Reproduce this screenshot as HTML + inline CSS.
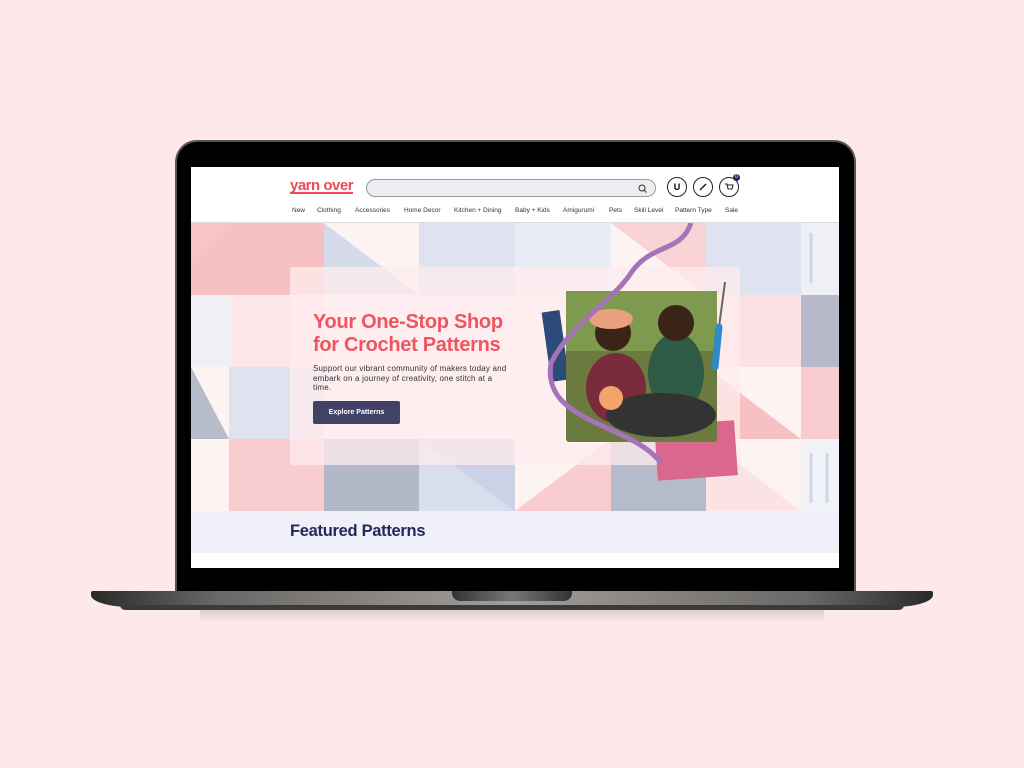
<!DOCTYPE html>
<html><head><meta charset="utf-8"><style>
*{margin:0;padding:0;box-sizing:border-box}
body{width:1024px;height:768px;background:#fde9e9;position:relative;overflow:hidden;font-family:"Liberation Sans",sans-serif}
.lid{position:absolute;left:175px;top:140px;width:681px;height:452px;background:#000;border-radius:22px 22px 0 0;border:2px solid #555;border-bottom:none}
.screen{position:absolute;left:191px;top:167px;width:648px;height:401px;background:#fff;overflow:hidden}
.base{position:absolute;left:91px;top:591px;width:842px;height:16px;background:linear-gradient(90deg,#2a2a2a,#6a6866 15%,#a29e9b 50%,#6a6866 85%,#2a2a2a);border-radius:2px 2px 40px 40px/2px 2px 12px 12px}
.base2{position:absolute;left:120px;top:605px;width:784px;height:5px;background:#3a3a3a;border-radius:0 0 30px 30px}
.notch{position:absolute;left:452px;top:591px;width:120px;height:10px;background:linear-gradient(90deg,#333,#777,#333);border-radius:0 0 8px 8px}
.shadow{position:absolute;left:200px;top:608px;width:624px;height:14px;background:linear-gradient(#d8c9c9,#fde9e9)}
.hdr{position:absolute;left:0;top:0;width:648px;height:56px;background:#fff;border-bottom:1px solid #ddd}
.logo{position:absolute;left:99px;top:10px;font-weight:bold;font-size:15px;color:#ee4a56;letter-spacing:-.5px}
.logo:after{content:"";position:absolute;left:0;right:0;bottom:0;height:2px;background:#ee4a56}
.search{position:absolute;left:175px;top:12px;width:290px;height:18px;border:1px solid #999;border-radius:9px;background:#ececf1}
.ic{position:absolute;top:10px;width:20px;height:20px;border:1.3px solid #222;border-radius:50%;font-size:9px;font-weight:bold;text-align:center;line-height:18px}
.nav{position:absolute;top:40px;font-size:6.5px;color:#333}
.hero{position:absolute;left:0;top:56px;width:648px;height:288px}
.card{position:absolute;left:99px;top:100px;width:450px;height:198px;background:rgba(255,236,238,.75);border-radius:3px}
h1{position:absolute;left:122px;top:144px;font-size:20px;line-height:23px;color:#ee5560;font-weight:bold;letter-spacing:-.3px;white-space:nowrap}
.p{position:absolute;left:122px;top:197px;font-size:8px;line-height:9.5px;color:#333;width:196px;letter-spacing:.2px}
.btn{position:absolute;left:122px;top:234px;width:87px;height:23px;background:#424167;border-radius:2px;color:#fff;font-size:7px;font-weight:bold;text-align:center;line-height:23px}
.feat{position:absolute;left:0;top:344px;width:648px;height:42px;background:#eff0f8}
.feat span{position:absolute;left:99px;top:11px;font-size:16.5px;font-weight:bold;color:#25285a;letter-spacing:-.3px}
</style></head><body>
<div class="lid"></div>
<div class="shadow"></div>
<div class="base"></div><div class="base2"></div><div class="notch"></div>
<div class="screen">
 <div class="hero">
  <svg width="648" height="288" viewBox="0 0 648 288">
   <rect width="648" height="288" fill="#fdf3f3"/>
   <polygon points="0,0 38,0 0,40" fill="#f7c4c7"/>
   <rect x="38" y="0" width="95" height="72" fill="#f7c1c4"/>
   <polygon points="0,40 38,0 38,72 0,72" fill="#f7c1c4"/>
   <polygon points="133,0 228,72 133,72" fill="#d6dbea"/>
   <rect x="228" y="0" width="96" height="72" fill="#dfe3ef"/>
   <rect x="324" y="0" width="96" height="72" fill="#e9ecf4"/>
   <polygon points="420,0 515,0 515,72" fill="#f9d2d5"/>
   <rect x="515" y="0" width="95" height="72" fill="#dfe3ef"/>
   <rect x="610" y="0" width="38" height="72" fill="#eef0f6"/>
   <rect x="0" y="72" width="38" height="72" fill="#eef0f6"/>
   <rect x="38" y="72" width="95" height="72" fill="#fde8e9"/>
   <rect x="515" y="72" width="95" height="72" fill="#fbe1e3"/>
   <rect x="610" y="72" width="38" height="72" fill="#b5b9c9"/>
   <polygon points="0,144 38,216 0,216" fill="#b7bccb"/>
   <rect x="38" y="144" width="95" height="72" fill="#dfe3ef"/>
   <polygon points="515,144 610,216 515,216" fill="#f7c1c4"/>
   <rect x="610" y="144" width="38" height="72" fill="#f9cdd0"/>
   <rect x="38" y="216" width="95" height="72" fill="#f9ccd0"/>
   <rect x="133" y="216" width="95" height="72" fill="#b3b8c9"/>
   <rect x="228" y="216" width="96" height="72" fill="#ccd2e6"/>
   <polygon points="228,216 324,288 228,288" fill="#d9deed"/>
   <polygon points="324,288 420,216 420,288" fill="#f9cdd0"/>
   <rect x="420" y="216" width="95" height="72" fill="#b6bbcb"/>
   <polygon points="515,216 610,288 515,288" fill="#fbe3e5"/>
   <rect x="610" y="216" width="38" height="72" fill="#f1f3f8"/>
   <g stroke="#c9cfe3" stroke-width="3" opacity=".8"><line x1="620" y1="10" x2="620" y2="60"/><line x1="636" y1="230" x2="636" y2="280"/><line x1="620" y1="230" x2="620" y2="280"/></g>
  </svg>
 </div>
 <div class="card"></div>
 <h1>Your One-Stop Shop<br>for Crochet Patterns</h1>
 <div class="p">Support our vibrant community of makers today and embark on a journey of creativity, one stitch at a time.</div>
 <div class="btn">Explore Patterns</div>
 <svg style="position:absolute;left:350px;top:56px" width="200" height="260">
  <rect x="5" y="88" width="18" height="70" fill="#2c4a7a" transform="rotate(-8 14 120)"/>
  <rect x="115" y="200" width="80" height="55" fill="#d9678e" transform="rotate(-4 155 227)"/>
  <rect x="25" y="68" width="151" height="151" rx="3" fill="#6b7a3f"/>
  <rect x="25" y="68" width="151" height="60" fill="#7f9a4e"/>
  <ellipse cx="75" cy="165" rx="30" ry="35" fill="#7a2c3c"/>
  <ellipse cx="135" cy="150" rx="28" ry="40" fill="#2f5a45"/>
  <circle cx="72" cy="110" r="18" fill="#3a2418"/><circle cx="135" cy="100" r="18" fill="#3a2418"/>
  <ellipse cx="70" cy="96" rx="22" ry="10" fill="#e9a07e"/>
  <ellipse cx="120" cy="192" rx="55" ry="22" fill="#333"/>
  <circle cx="70" cy="175" r="12" fill="#f3a36b"/>
  <path d="M150 0 C140 30 110 20 90 50 C70 80 30 100 10 140 C0 200 90 200 120 240" stroke="#a574b8" stroke-width="5" fill="none"/>
 </svg>
 <svg style="position:absolute;left:520px;top:115px" width="20" height="90"><line x1="14" y1="0" x2="6" y2="60" stroke="#666" stroke-width="2"/><line x1="8" y1="45" x2="4" y2="85" stroke="#2d8bc7" stroke-width="7" stroke-linecap="round"/></svg>
 <div class="feat"><span>Featured Patterns</span></div>
 <div class="hdr">
  <div class="logo">yarn over</div>
  <div class="search"><svg style="position:absolute;right:8px;top:4px" width="9" height="9"><circle cx="4" cy="4" r="3" stroke="#333" fill="none"/><line x1="6" y1="6" x2="8.5" y2="8.5" stroke="#333"/></svg></div>
  <div class="ic" style="left:476px">U</div>
  <div class="ic" style="left:502px"><svg width="10" height="10" style="margin-top:4px"><line x1="2" y1="8" x2="8" y2="2" stroke="#222" stroke-width="1.5"/></svg></div>
  <div class="ic" style="left:528px"><svg width="10" height="10" style="margin-top:4px"><path d="M1 2h2l1 5h4l1-4H3.5" stroke="#222" fill="none"/></svg></div>
  <div style="position:absolute;left:542px;top:7px;width:7px;height:7px;border-radius:50%;background:#25285a;color:#fff;font-size:5px;text-align:center;line-height:7px">0</div>
  <div class="nav" style="left:101px">New</div>
  <div class="nav" style="left:126px">Clothing</div>
  <div class="nav" style="left:164px">Accessories</div>
  <div class="nav" style="left:213px">Home Decor</div>
  <div class="nav" style="left:263px">Kitchen + Dining</div>
  <div class="nav" style="left:324px">Baby + Kids</div>
  <div class="nav" style="left:372px">Amigurumi</div>
  <div class="nav" style="left:418px">Pets</div>
  <div class="nav" style="left:443px">Skill Level</div>
  <div class="nav" style="left:484px">Pattern Type</div>
  <div class="nav" style="left:534px">Sale</div>
 </div>
</div>
</body></html>
